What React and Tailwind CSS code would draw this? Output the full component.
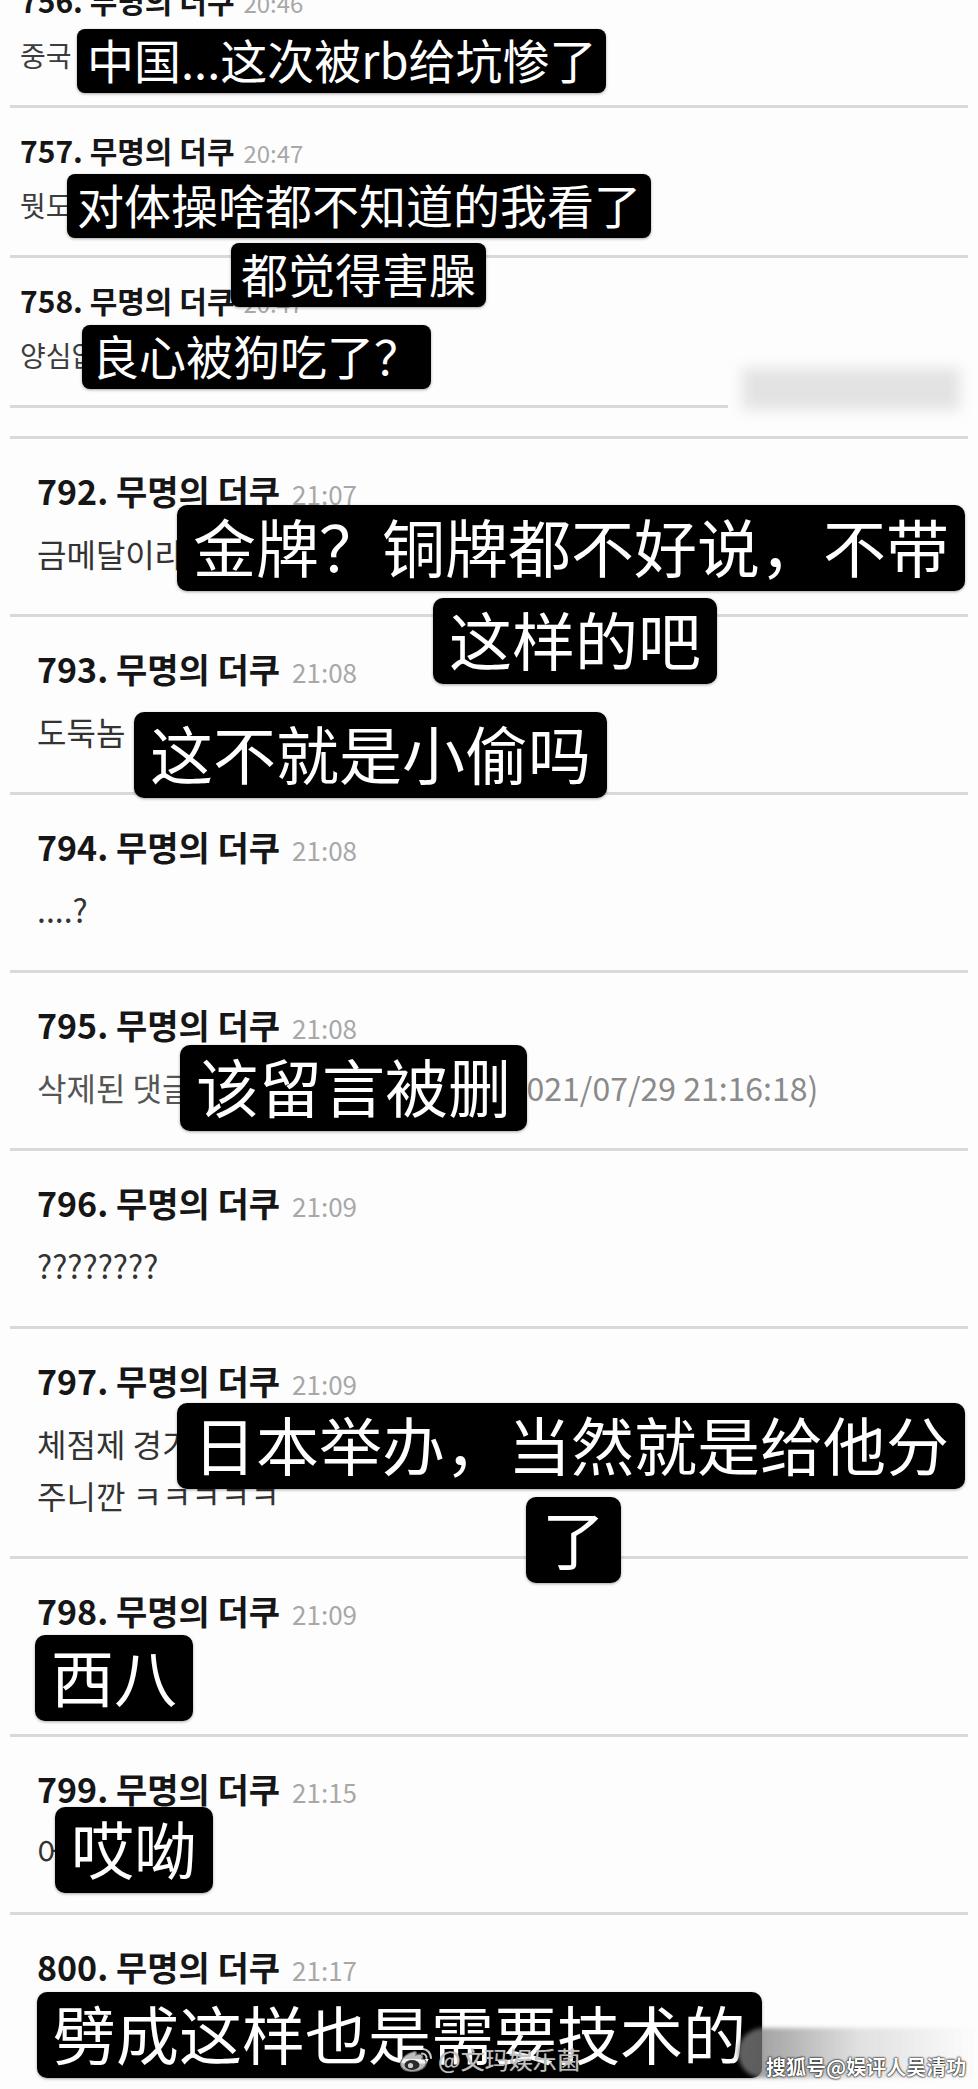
import React from "react";

function DividerFull() {
  return <div className="mx-[10px] h-[3px] bg-[#d9d9d9]" />;
}

function RowA({ num, time, body, last }) {
  return (
    <div>
      <div className="h-[147px] pt-[25px] pl-[20px] overflow-hidden">
        <div className="flex items-baseline h-[34px] leading-[34px] whitespace-nowrap">
          <span className="text-[30px] font-bold text-[#161616]">{num}. 무명의 더쿠</span>
          <span className="ml-[9px] text-[24px] text-[#a8a8a8]">{time}</span>
        </div>
        <div className="mt-[20px] h-[36px] leading-[36px] text-[28px] text-[#3c3c3c] whitespace-nowrap">
          {body}
        </div>
      </div>
      {last ? (
        <div className="ml-[10px] w-[718px] h-[3px] bg-[#d9d9d9]" />
      ) : (
        <DividerFull />
      )}
    </div>
  );
}

function RowB({ num, time, children }) {
  return (
    <div>
      <div className="pt-[32px] pb-[35px] pl-[37px] overflow-hidden">
        <div className="flex items-baseline h-[40px] leading-[40px] whitespace-nowrap">
          <span className="text-[34px] font-bold text-[#161616]">{num}. 무명의 더쿠</span>
          <span className="ml-[12px] text-[26px] text-[#a8a8a8]">{time}</span>
        </div>
        <div className="mt-[16px] leading-[52px] text-[32px] text-[#333333] whitespace-nowrap">
          {children}
        </div>
      </div>
      <DividerFull />
    </div>
  );
}

function WeiboLogo() {
  return (
    <svg width="36" height="30" viewBox="0 0 36 30">
      <path
        d="M15 8 C7 10 1 17 3 22 C5 28 17 29 24 25 C30 21 29 15 24 15 C26 11 23 9 18 11 C19 8 18 7 15 8Z"
        fill="rgba(235,235,235,0.8)"
        stroke="#6b6b6b"
        strokeWidth="1.2"
      />
      <ellipse cx="14" cy="21" rx="7.5" ry="5" fill="#2a2a2a" />
      <circle cx="12.5" cy="21.5" r="2.6" fill="rgba(235,235,235,0.85)" />
      <path d="M25 5 A9 9 0 0 1 33 14" stroke="rgba(235,235,235,0.85)" strokeWidth="2.2" fill="none" strokeLinecap="round" />
      <path d="M24 9.5 A4.5 4.5 0 0 1 28.5 14" stroke="rgba(235,235,235,0.85)" strokeWidth="2" fill="none" strokeLinecap="round" />
    </svg>
  );
}

export default function App() {
  return (
    <div className="relative w-[978px] h-[2089px] overflow-hidden bg-[#fdfdfd] font-['Noto_Sans_CJK_KR','Noto_Sans_CJK_SC',sans-serif]">
      {/* Part 1 */}
      <div className="-mt-[42px]">
        <RowA num="756" time="20:46" body="중국 이번에 일본한테 제대로 당했네" />
        <RowA num="757" time="20:47" body="뭣도 모르는 내가 봐도 부끄럽다" />
        <RowA num="758" time="20:47" body="양심없네 진짜" last />
      </div>

      {/* gap between screenshots */}
      <div className="h-[28px]" />

      {/* Part 2 */}
      <DividerFull />
      <RowB num="792" time="21:07">금메달이라니 말도 안 돼</RowB>
      <RowB num="793" time="21:08">도둑놈 아니냐</RowB>
      <RowB num="794" time="21:08">....?</RowB>
      <RowB num="795" time="21:08">
        <div className="flex">
          <span className="w-[461px] shrink-0 text-[#555555]">삭제된 댓글입니다</span>
          <span className="text-[#8a8a8a]">(2021/07/29 21:16:18)</span>
        </div>
      </RowB>
      <RowB num="796" time="21:09">????????</RowB>
      <RowB num="797" time="21:09">
        <div>체점제 경기인데 일본에서 하니까 점수를 막 퍼주는 우</div>
        <div>주니깐 ㅋㅋㅋㅋㅋ</div>
      </RowB>
      <RowB num="798" time="21:09">ㅅㅂ</RowB>
      <RowB num="799" time="21:15">어이없다</RowB>
      <RowB num="800" time="21:17">이렇게 깎는 것도 기술이다</RowB>

      {/* blurred artifact */}
      <div className="absolute left-[742px] top-[368px] w-[218px] h-[42px] bg-[#e3e3e3] blur-[7px]" />

      {/* Part 1 captions */}
      <div className="absolute left-[77px] top-[29px] h-[64px] px-[10px] rounded-[8px] bg-black text-white text-[47px] leading-[59px] whitespace-nowrap shadow-[0_1px_3px_rgba(0,0,0,0.35)] font-['Noto_Sans_CJK_SC',sans-serif]">
        中国...这次被rb给坑惨了
      </div>
      <div className="absolute left-[67px] top-[174px] h-[64px] px-[10px] rounded-[8px] bg-black text-white text-[47px] leading-[59px] whitespace-nowrap shadow-[0_1px_3px_rgba(0,0,0,0.35)] font-['Noto_Sans_CJK_SC',sans-serif]">
        对体操啥都不知道的我看了
      </div>
      <div className="absolute left-[231px] top-[243px] h-[64px] px-[10px] rounded-[8px] bg-black text-white text-[47px] leading-[59px] whitespace-nowrap shadow-[0_1px_3px_rgba(0,0,0,0.35)] font-['Noto_Sans_CJK_SC',sans-serif]">
        都觉得害臊
      </div>
      <div className="absolute left-[82px] top-[325px] h-[64px] px-[10px] rounded-[8px] bg-black text-white text-[47px] leading-[59px] whitespace-nowrap shadow-[0_1px_3px_rgba(0,0,0,0.35)] font-['Noto_Sans_CJK_SC',sans-serif]">
        良心被狗吃了？
      </div>

      {/* Part 2 captions */}
      <div className="absolute left-[177px] top-[505px] h-[86px] px-[16px] rounded-[10px] bg-black text-white text-[63px] leading-[79px] whitespace-nowrap shadow-[0_1px_3px_rgba(0,0,0,0.35)] font-['Noto_Sans_CJK_SC',sans-serif]">
        金牌？铜牌都不好说，不带
      </div>
      <div className="absolute left-[433px] top-[598px] h-[86px] px-[16px] rounded-[10px] bg-black text-white text-[63px] leading-[79px] whitespace-nowrap shadow-[0_1px_3px_rgba(0,0,0,0.35)] font-['Noto_Sans_CJK_SC',sans-serif]">
        这样的吧
      </div>
      <div className="absolute left-[134px] top-[712px] h-[86px] px-[16px] rounded-[10px] bg-black text-white text-[63px] leading-[79px] whitespace-nowrap shadow-[0_1px_3px_rgba(0,0,0,0.35)] font-['Noto_Sans_CJK_SC',sans-serif]">
        这不就是小偷吗
      </div>
      <div className="absolute left-[180px] top-[1045px] h-[86px] px-[16px] rounded-[10px] bg-black text-white text-[63px] leading-[79px] whitespace-nowrap shadow-[0_1px_3px_rgba(0,0,0,0.35)] font-['Noto_Sans_CJK_SC',sans-serif]">
        该留言被删
      </div>
      <div className="absolute left-[177px] top-[1403px] h-[86px] px-[16px] rounded-[10px] bg-black text-white text-[63px] leading-[79px] whitespace-nowrap shadow-[0_1px_3px_rgba(0,0,0,0.35)] font-['Noto_Sans_CJK_SC',sans-serif]">
        日本举办，当然就是给他分
      </div>
      <div className="absolute left-[526px] top-[1497px] h-[86px] px-[16px] rounded-[10px] bg-black text-white text-[63px] leading-[79px] whitespace-nowrap shadow-[0_1px_3px_rgba(0,0,0,0.35)] font-['Noto_Sans_CJK_SC',sans-serif]">
        了
      </div>
      <div className="absolute left-[35px] top-[1635px] h-[86px] px-[16px] rounded-[10px] bg-black text-white text-[63px] leading-[79px] whitespace-nowrap shadow-[0_1px_3px_rgba(0,0,0,0.35)] font-['Noto_Sans_CJK_SC',sans-serif]">
        西八
      </div>
      <div className="absolute left-[55px] top-[1807px] h-[86px] px-[16px] rounded-[10px] bg-black text-white text-[63px] leading-[79px] whitespace-nowrap shadow-[0_1px_3px_rgba(0,0,0,0.35)] font-['Noto_Sans_CJK_SC',sans-serif]">
        哎呦
      </div>
      <div className="absolute left-[37px] top-[1992px] h-[86px] px-[16px] rounded-[10px] bg-black text-white text-[63px] leading-[79px] whitespace-nowrap shadow-[0_1px_3px_rgba(0,0,0,0.35)] font-['Noto_Sans_CJK_SC',sans-serif]">
        劈成这样也是需要技术的
      </div>

      {/* Watermarks */}
      <div className="absolute left-[398px] top-[2044px] flex items-center gap-[4px]">
        <WeiboLogo />
        <span className="text-[24px] leading-[28px] text-[#e0e0e0]/80 font-['Noto_Sans_CJK_SC',sans-serif] [text-shadow:0_0_1px_#555]">
          @文玛娱乐菌
        </span>
      </div>
      <div className="absolute left-[738px] top-[2028px] w-[240px] h-[50px] rounded-l-[25px] bg-linear-to-r from-[#7a7a7a]/80 via-[#b5b5b5]/40 to-transparent blur-[2px]" />
      <div className="absolute left-[766px] top-[2054px] text-[20px] leading-[26px] font-bold text-white whitespace-nowrap font-['Noto_Sans_CJK_SC',sans-serif] [text-shadow:0_0_2px_#000,0_0_2px_#000]">
        搜狐号@娱评人吴清功
      </div>
    </div>
  );
}
